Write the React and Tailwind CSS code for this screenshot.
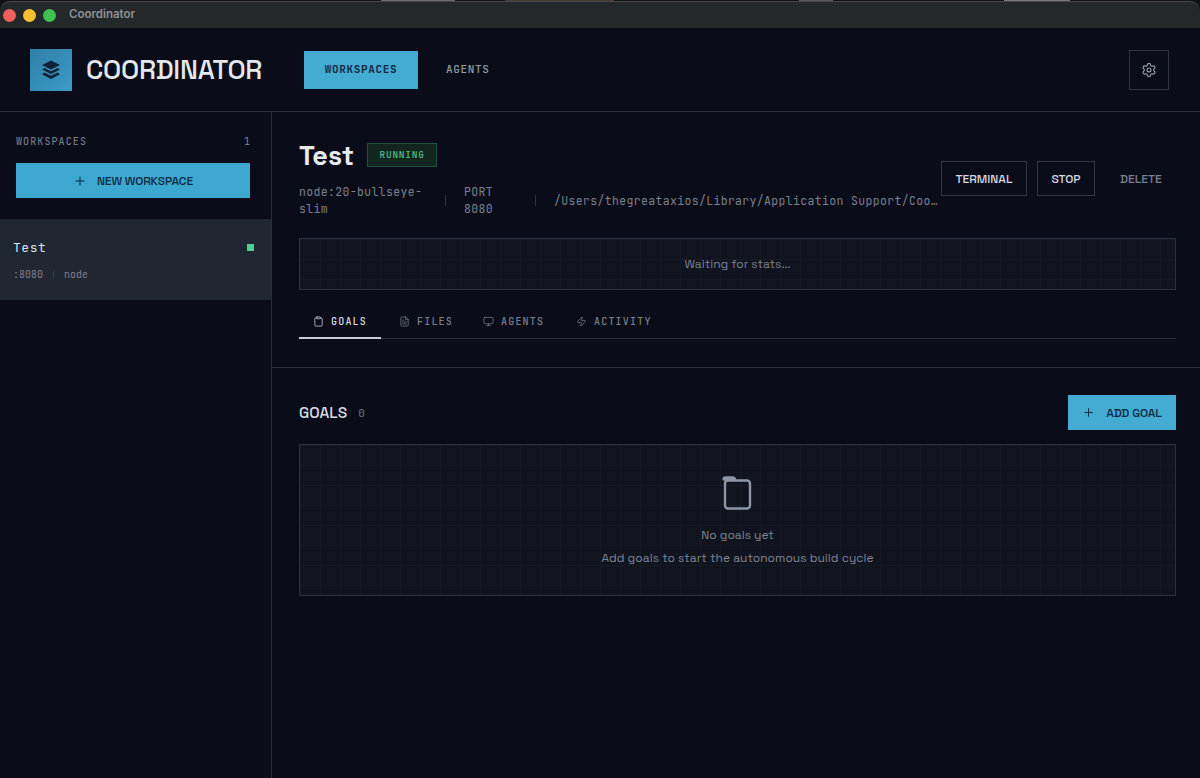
import React from 'react'
import { Plus, Settings, Clipboard, FileText, Monitor, Zap } from 'lucide-react'

const mono = "font-['JetBrains_Mono','DejaVu_Sans_Mono','Liberation_Mono',monospace]"
const sans = "font-['Space_Grotesk',Inter,'Liberation_Sans',sans-serif]"
const gridBg = "bg-[#11141f] bg-[linear-gradient(#161a27_1px,transparent_1px),linear-gradient(90deg,#161a27_1px,transparent_1px)] bg-[size:20px_20px]"

const LayersLogo = () => (
  <svg width="20" height="20" viewBox="0 0 20 20" fill="#0c2338">
    <path d="M10 0.5 L19 5 L10 9.5 L1 5 Z" />
    <path d="M3.4 8 L10 11.3 L16.6 8 L19 9.6 L10 14 L1 9.6 Z" />
    <path d="M3.4 12.6 L10 15.8 L16.6 12.6 L19 14.2 L10 19 L1 14.2 Z" />
  </svg>
)

// clipboard with the clip sitting off to the top-left, as the empty state draws it
const GoalsIcon = () => (
  <svg width="32" height="36" viewBox="0 0 32 36" fill="none" stroke="#8d96a9" strokeWidth="2.4" className="-translate-x-px">
    <rect x="4" y="5.5" width="25" height="28" rx="3" />
    <path d="M2 4.5 Q2 2 5 2 H11 Q14.5 2 14.5 5 H4 Q2 5 2 4.5 Z" fill="#8d96a9" strokeWidth="1.4" />
  </svg>
)

const Tab = ({ icon: Icon, label, active, className }) => (
  <div className={`flex items-center gap-[7px] h-[36px] pt-[3px] ${className} ${active ? 'border-b-2 border-[#c9ced8] text-[#d6dae2] -mb-px' : 'text-[#7a7f8d] pb-[2px]'}`}>
    <Icon size={11} strokeWidth={1.6} />
    <span className={`${mono} text-[10px] tracking-[0.12em] font-medium`}>{label}</span>
  </div>
)

export default function App() {
  return (
    <div className={`w-[1200px] h-[778px] overflow-hidden bg-[#111214] ${sans}`}>
      {/* what shows of the desktop behind the window */}
      <div className="h-[1px] flex">
        <span className="ml-[381px] w-[74px] bg-[#6a6c6e]" />
        <span className="ml-[50px] w-[109px] bg-[#4a3a33]" />
        <span className="ml-[185px] w-[34px] bg-[#55575a]" />
        <span className="ml-[171px] w-[66px] bg-[#77797b]" />
      </div>
      <div className="h-[27px] bg-[#25282b] border-t border-[#45474a] rounded-t-[10px] flex items-center pl-[3px]">
        <div className="flex items-center gap-[7px]">
          <span className="w-[13px] h-[13px] rounded-full bg-[#f0605a]" />
          <span className="w-[13px] h-[13px] rounded-full bg-[#f8c12f]" />
          <span className="w-[13px] h-[13px] rounded-full bg-[#3fc14f]" />
        </div>
        <span className="ml-[13px] text-[11.5px] font-semibold text-[#8f9194] font-['Inter',sans-serif]">Coordinator</span>
      </div>

      <div className="h-[750px] bg-[#0a0d19] flex flex-col">
        <header className="h-[84px] shrink-0 border-b border-[#2a2e3b] flex items-center pl-[30px] pr-[31px]">
          <div className="w-[42px] h-[42px] bg-[linear-gradient(135deg,#2f7fa8,#3c9cc6)] flex items-center justify-center">
            <LayersLogo />
          </div>
          <span className="ml-[14px] w-[218px] text-[27px] leading-none font-medium tracking-[-0.01em] text-[#e4e7ee]">COORDINATOR</span>
          <div className={`w-[114px] h-[38px] bg-[#44abd2] flex items-center justify-center text-[11px] font-semibold tracking-[0.06em] text-[#0d2a42] ${mono}`}>WORKSPACES</div>
          <div className={`ml-[28px] text-[11px] font-medium tracking-[0.06em] text-[#969ba7] ${mono}`}>AGENTS</div>
          <div className="ml-auto w-[40px] h-[40px] border border-[#2f3341] flex items-center justify-center text-[#a0a6b4]">
            <Settings size={16} strokeWidth={1.6} />
          </div>
        </header>

        <div className="flex-1 flex min-h-0">
          <aside className="w-[272px] shrink-0 border-r border-[#2a2e3b]">
            <div className="px-[16px] pt-[22px] h-[108px] border-b border-[#1e2230]">
              <div className={`flex justify-between items-center pr-[4px] ${mono} text-[10px] tracking-[0.11em] text-[#7f8492]`}>
                <span>WORKSPACES</span>
                <span>1</span>
              </div>
              <div className="mt-[14px] w-[234px] h-[35px] bg-[#3ca8d0] flex items-center justify-center gap-[10px] text-[12px] font-medium tracking-[-0.01em] text-[#0d2a42]">
                <Plus size={14} strokeWidth={1.8} />
                <span>NEW WORKSPACE</span>
              </div>
            </div>
            <div className="h-[80px] bg-[#212633] pl-[13px] pr-[17px] pt-[18px]">
              <div className="flex items-center justify-between">
                <span className={`${mono} text-[13px] tracking-[0.04em] text-[#dfe2e9]`}>Test</span>
                <span className="w-[7px] h-[7px] bg-[#4fcf95]" />
              </div>
              <div className={`mt-[9px] flex items-center gap-[10px] ${mono} text-[10px] text-[#7b8090]`}>
                <span>:8080</span>
                <span className="w-px h-[9px] bg-[#353a48]" />
                <span>node</span>
              </div>
            </div>
          </aside>

          <main className="flex-1 min-w-0">
            <div className="h-[256px] border-b border-[#2a2e3b] pl-[27px] pr-[24px] pt-[26px]">
              <div className="flex">
                <div className="w-[642px]">
                  <div className="flex items-center gap-[13px] h-[34px]">
                    <h1 className="text-[27px] leading-none font-semibold text-[#e8eaf0]">Test</h1>
                    <span className={`w-[70px] h-[24px] border border-[#23503f] bg-[#12261f] flex items-center justify-center ${mono} text-[9.5px] font-medium tracking-[0.08em] text-[#4fbf88]`}>RUNNING</span>
                  </div>
                  <div className={`mt-[11px] flex items-center ${mono} text-[11.5px] leading-[17px] tracking-[0.03em] text-[#7b8090]`}>
                    <span className="w-[128px]">node:20-bullseye-slim</span>
                    <span className="ml-[18px] w-px h-[11px] bg-[#2f3341]" />
                    <span className="ml-[18px] w-[36px]">PORT 8080</span>
                    <span className="ml-[35px] w-px h-[11px] bg-[#2f3341]" />
                    <span className="ml-[18px] whitespace-nowrap">/Users/thegreataxios/Library/Application Support/Coo…</span>
                  </div>
                </div>
                <div className="flex items-center h-[35px] mt-[23px] text-[12px] font-medium">
                  <div className="w-[86px] h-[35px] border border-[#333847] flex items-center justify-center text-[#d5d8e0]">TERMINAL</div>
                  <div className="ml-[10px] w-[58px] h-[35px] border border-[#333847] flex items-center justify-center text-[#d5d8e0]">STOP</div>
                  <div className="ml-[25px] text-[#7b8090]">DELETE</div>
                </div>
              </div>
              <div className={`mt-[21px] h-[52px] w-[877px] border border-[#2a2e3f] ${gridBg} flex items-center justify-center text-[12px] text-[#7b8090]`}>
                Waiting for stats...
              </div>
              <div className="mt-[13px] w-[877px] h-[36px] border-b border-[#2a2e3b] flex">
                <Tab icon={Clipboard} label="GOALS" active className="w-[82px] justify-center" />
                <Tab icon={FileText} label="FILES" className="ml-[18px] w-[66px]" />
                <Tab icon={Monitor} label="AGENTS" className="ml-[18px] w-[75px]" />
                <Tab icon={Zap} label="ACTIVITY" className="ml-[18px] w-[90px]" />
              </div>
            </div>

            <div className="pl-[27px] pr-[24px] pt-[27px]">
              <div className="flex items-center justify-between h-[35px]">
                <div className="flex items-center gap-[11px] mt-[2px]">
                  <span className="text-[15.5px] font-medium text-[#d8dbe3]">GOALS</span>
                  <span className={`${mono} text-[11px] text-[#6a6f7e]`}>0</span>
                </div>
                <div className="w-[108px] h-[35px] bg-[#44abd2] flex items-center justify-center gap-[11px] text-[12px] font-medium tracking-[-0.01em] text-[#0d2a42]">
                  <Plus size={13} strokeWidth={1.8} />
                  <span>ADD GOAL</span>
                </div>
              </div>
              <div className={`mt-[14px] w-[877px] h-[152px] border border-[#2a2e3f] ${gridBg} flex flex-col items-center pt-[30px]`}>
                <GoalsIcon />
                <div className="mt-[16px] text-[12px] leading-[16px] text-[#7f8496]">No goals yet</div>
                <div className="mt-[7px] text-[12px] leading-[16px] tracking-[0.003em] text-[#7f8496]">Add goals to start the autonomous build cycle</div>
              </div>
            </div>
          </main>
        </div>
      </div>
    </div>
  )
}
